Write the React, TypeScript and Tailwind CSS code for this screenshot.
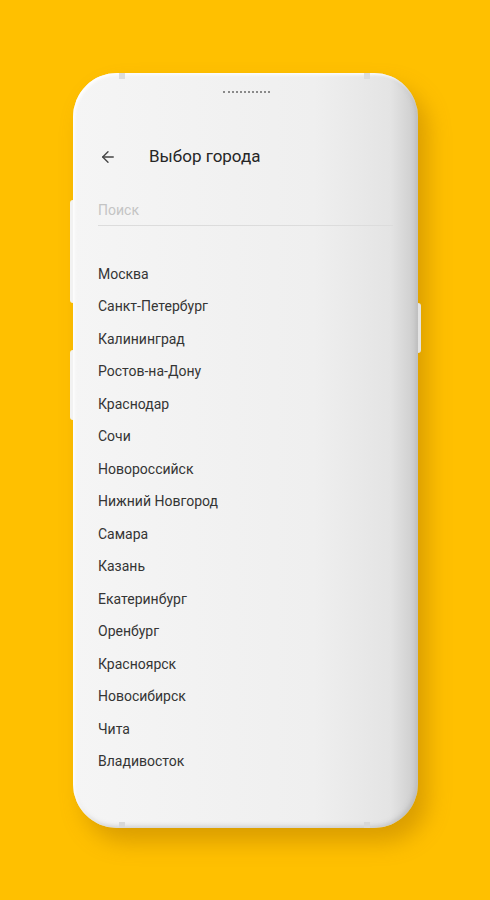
import { ArrowLeft } from "lucide-react";

const CITIES = [
  "Москва",
  "Санкт-Петербург",
  "Калининград",
  "Ростов-на-Дону",
  "Краснодар",
  "Сочи",
  "Новороссийск",
  "Нижний Новгород",
  "Самара",
  "Казань",
  "Екатеринбург",
  "Оренбург",
  "Красноярск",
  "Новосибирск",
  "Чита",
  "Владивосток",
];

export default function App() {
  return (
    <div className="w-[490px] h-[900px] bg-[#ffc000] pt-[73px] pl-[73px] overflow-hidden font-['Roboto',sans-serif]">
      <div className="relative w-[345px] h-[755px] rounded-[44px] bg-[linear-gradient(90deg,#f5f5f5_0%,#efefef_70%,#e4e4e4_92%,#cbcbcb_100%)] shadow-[10px_14px_22px_rgba(150,95,0,0.35),inset_2px_2px_3px_rgba(255,255,255,0.9),inset_-2px_-2px_4px_rgba(170,170,170,0.5)]">
        {/* frame details: antenna tabs, side keys, speaker */}
        <div className="absolute left-[46px] top-0 w-[6px] h-[6px] bg-[#dcdcdc]" />
        <div className="absolute right-[48px] top-0 w-[6px] h-[6px] bg-[#dcdcdc]" />
        <div className="absolute left-[46px] bottom-0 w-[6px] h-[6px] bg-[#d8d8d8]" />
        <div className="absolute right-[48px] bottom-0 w-[6px] h-[6px] bg-[#d8d8d8]" />
        <div className="absolute left-[-3px] top-[127px] w-[3px] h-[103px] bg-[#f2f2f2] rounded-l-sm" />
        <div className="absolute left-[-3px] top-[277px] w-[3px] h-[70px] bg-[#f2f2f2] rounded-l-sm" />
        <div className="absolute right-[-3px] top-[230px] w-[3px] h-[50px] bg-[#e4e4e4] rounded-r-sm" />
        <div className="absolute left-[150px] top-[18px] w-[47px] border-t-2 border-dotted border-[#8a8a8a]" />

        <div className="flex flex-col px-[25px] pt-[64px]">
          <div className="flex items-center h-[40px]">
            <ArrowLeft size={18} strokeWidth={1.8} className="ml-[1px] text-[#444]" />
            <span className="ml-[32px] text-[17px] text-[#262626]">Выбор города</span>
          </div>

          <div className="mt-[18px] h-[31px] flex items-center border-b border-[#dcdcdc] text-[14px] text-[#c4c4c4]">
            Поиск
          </div>

          <div className="mt-[32px] flex flex-col">
            {CITIES.map((c) => (
              <div key={c} className="h-[32.5px] flex items-center text-[14px] text-[#353535]">
                {c}
              </div>
            ))}
          </div>
        </div>
      </div>
    </div>
  );
}
